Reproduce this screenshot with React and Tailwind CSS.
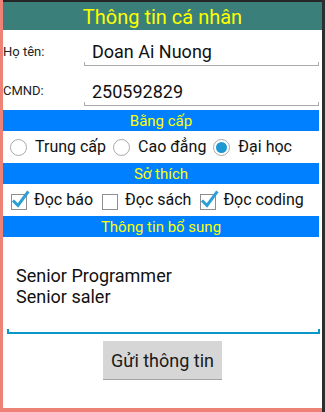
import React from 'react';

const Band = ({ children }) => (
  <div className="h-[21px] mr-[3px] bg-[#0080ff] text-[#ffff00] text-[15px] leading-[22px] text-center">
    {children}
  </div>
);

const Radio = ({ checked, label }) => (
  <div className="flex items-center">
    <span className="w-[17px] h-[17px] rounded-full border-[1.5px] border-[#a9a9a9] flex items-center justify-center">
      {checked && <span className="w-[11px] h-[11px] rounded-full bg-[#1d98d3]" />}
    </span>
    <span className="ml-[8px]">{label}</span>
  </div>
);

const Check = ({ checked, label }) => (
  <div className="flex items-center">
    <svg width="20" height="20" viewBox="0 0 20 20">
      <rect x="1.5" y="4.5" width="15" height="15" fill="none" stroke="#8e8e8e" strokeWidth="1" />
      {checked && (
        <path d="M4 11.5 L8 15.5 L17.5 2.5" fill="none" stroke="#2b9fd6" strokeWidth="3" strokeLinecap="square" />
      )}
    </svg>
    <span className="ml-[4px]">{label}</span>
  </div>
);

const Field = ({ label, value, pt, labelPt }) => (
  <div className="flex mr-[3px]" style={{ paddingTop: pt }}>
    <div className="w-[81px] text-[13px] leading-[16px] text-[#222]" style={{ paddingTop: labelPt }}>
      {label}
    </div>
    <div className="flex-1 flex flex-col">
      <div className="pl-[8px] text-[18px] leading-[20px] text-[#111]">{value}</div>
      <div className="h-[4px] border-x border-b border-[#ababab]" />
    </div>
  </div>
);

export default function App() {
  return (
    <div className="w-[325px] h-[412px] flex bg-white font-['Roboto',sans-serif]">
      <div className="flex-1 flex flex-col border-l-[3px] border-b-[4px] border-[#ee8276]">
        <div className="h-[2px] bg-[#262626]" />
        <div className="h-[28px] pt-[1px] bg-[#3b7f7a] text-[#ffff00] text-[20px] leading-[28px] text-center">
          Thông tin cá nhân
        </div>

        <Field label="Họ tên:" value="Doan Ai Nuong" pt={12} labelPt={2} />
        <Field label="CMND:" value="250592829" pt={16} labelPt={1} />

        <div className="mt-[4px]">
          <Band>Bằng cấp</Band>
          <div className="h-[32px] flex items-center gap-[7px] pl-[7px] text-[16px] text-[#111]">
            <Radio label="Trung cấp" />
            <Radio label="Cao đẳng" />
            <Radio checked label="Đại học" />
          </div>
          <Band>Sở thích</Band>
          <div className="h-[32px] flex items-center gap-[8px] pl-[7px] text-[16px] text-[#111]">
            <Check checked label="Đọc báo" />
            <Check label="Đọc sách" />
            <Check checked label="Đọc coding" />
          </div>
          <Band>Thông tin bổ sung</Band>
        </div>

        <div className="pt-[28px] pl-[13px] text-[18px] leading-[21px] text-[#111]">
          <div>Senior Programmer</div>
          <div>Senior saler</div>
        </div>
        <div className="mt-[22px] ml-[4px] mr-[2px] h-[5px] border-x-2 border-b-2 border-[#0a96c9]" />

        <div className="flex justify-center mt-[7px]">
          <button className="w-[119px] h-[39px] bg-[#d6d6d6] border-b border-[#a3a3a3] text-[18px] text-[#1a1a1a]">
            Gửi thông tin
          </button>
        </div>
      </div>
      <div className="w-[3px] bg-[#2e2e2e]" />
    </div>
  );
}
